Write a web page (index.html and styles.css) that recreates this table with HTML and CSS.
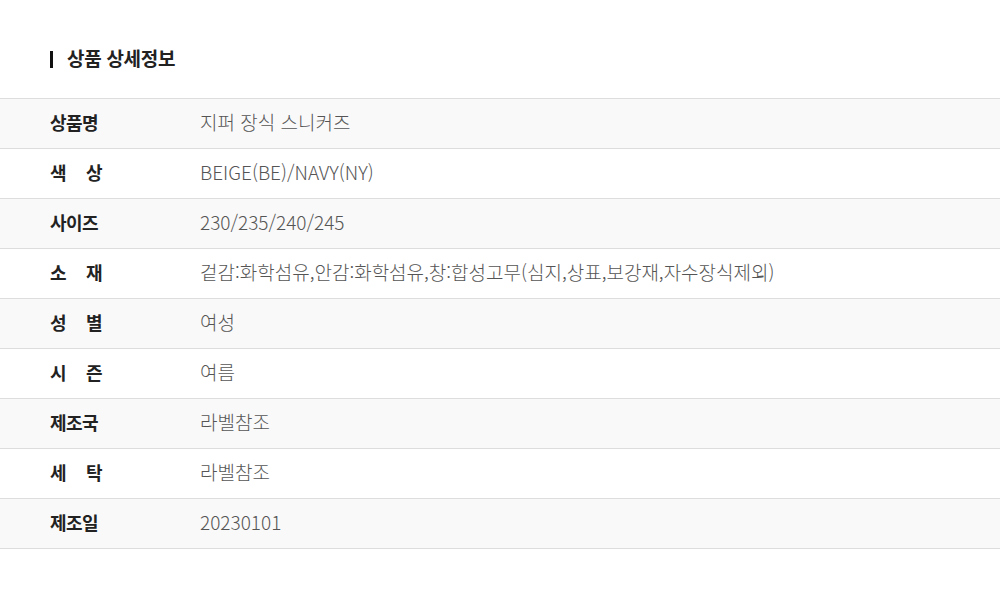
FILE: index.html
```html
<!DOCTYPE html>
<html lang="ko">
<head>
    <meta charset="UTF-8">
    <meta name="viewport" content="width=device-width, initial-scale=1.0">
    <title>상품 상세정보</title>
    <link rel="stylesheet" href="styles.css">
</head>
<body>
    <div class="detail">
        <h2 class="detail-title">상품 상세정보</h2>
        <table class="info-table">
            <tr><th><span>상품명</span></th><td>지퍼 장식 스니커즈</td></tr>
            <tr><th><span>색 상</span></th><td>BEIGE(BE)/NAVY(NY)</td></tr>
            <tr><th><span>사이즈</span></th><td>230/235/240/245</td></tr>
            <tr><th><span>소 재</span></th><td>겉감:화학섬유,안감:화학섬유,창:합성고무(심지,상표,보강재,자수장식제외)</td></tr>
            <tr><th><span>성 별</span></th><td>여성</td></tr>
            <tr><th><span>시 즌</span></th><td>여름</td></tr>
            <tr><th><span>제조국</span></th><td>라벨참조</td></tr>
            <tr><th><span>세 탁</span></th><td>라벨참조</td></tr>
            <tr><th><span>제조일</span></th><td>20230101</td></tr>
        </table>
    </div>
</body>
</html>
```

FILE: styles.css
```css
/* 기본 */
body {
    margin: 0;
    padding: 0;
    background: #fff;
    font-family: 'Noto Sans CJK KR', 'Noto Sans', sans-serif;
    color: #222;
}
.detail {
    padding-top: 45px;
}
/* 제목 */
.detail-title {
    display: flex;
    align-items: center;
    gap: 14px;
    margin: 0 0 27px 50px;
    font-size: 19px;
    font-weight: 700;
    line-height: 26px;
    letter-spacing: -0.3px;
}
.detail-title::before {
    content: '';
    width: 3px;
    height: 17px;
    margin-top: 2px;
    background: #111;
}
/* 표 */
.info-table {
    width: 100%;
    border-collapse: collapse;
    border-top: 1px solid #ddd;
}
.info-table tr {
    height: 50px;
    border-bottom: 1px solid #ddd;
}
.info-table tr:nth-child(odd) {
    background: #f9f9f9;
}
.info-table th {
    width: 150px;
    padding: 0 0 4px 50px;
    text-align: left;
    font-size: 18px;
    font-weight: 700;
    color: #222;
}
.info-table th span {
    display: block;
    width: 52px;
    text-align: justify;
    text-align-last: justify;
    letter-spacing: -0.5px;
}
.info-table td {
    padding: 0 0 4px;
    font-size: 19px;
    font-weight: 300;
    color: #555;
}
```
